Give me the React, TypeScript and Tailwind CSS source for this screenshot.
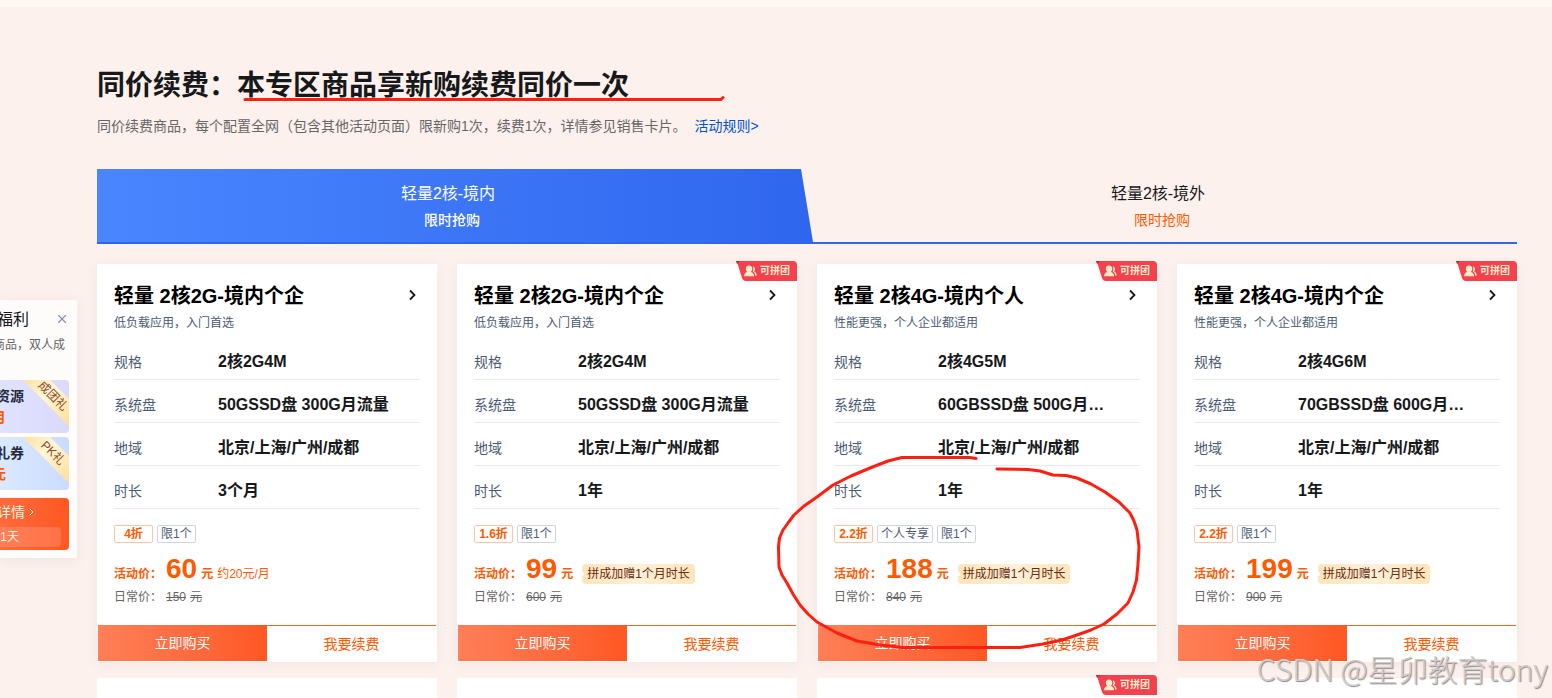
import { X } from 'lucide-react'

type Plan = {
  title: string
  desc: string
  spec: string
  disk: string
  period: string
  tags: string[]
  discount: string
  price: number
  origin: number
  monthly?: string
  bonus?: string
}

const plans: Plan[] = [
  {
    title: '轻量 2核2G-境内个企',
    desc: '低负载应用，入门首选',
    spec: '2核2G4M',
    disk: '50GSSD盘 300G月流量',
    period: '3个月',
    discount: '4折',
    tags: ['限1个'],
    price: 60,
    origin: 150,
    monthly: '约20元/月',
  },
  {
    title: '轻量 2核2G-境内个企',
    desc: '低负载应用，入门首选',
    spec: '2核2G4M',
    disk: '50GSSD盘 300G月流量',
    period: '1年',
    discount: '1.6折',
    tags: ['限1个'],
    price: 99,
    origin: 600,
    bonus: '拼成加赠1个月时长',
  },
  {
    title: '轻量 2核4G-境内个人',
    desc: '性能更强，个人企业都适用',
    spec: '2核4G5M',
    disk: '60GBSSD盘 500G月流量',
    period: '1年',
    discount: '2.2折',
    tags: ['个人专享', '限1个'],
    price: 188,
    origin: 840,
    bonus: '拼成加赠1个月时长',
  },
  {
    title: '轻量 2核4G-境内个企',
    desc: '性能更强，个人企业都适用',
    spec: '2核4G6M',
    disk: '70GBSSD盘 600G月流量',
    period: '1年',
    discount: '2.2折',
    tags: ['限1个'],
    price: 199,
    origin: 900,
    bonus: '拼成加赠1个月时长',
  },
]

function GroupBadge() {
  return (
    <div className="absolute -right-px -top-1 flex h-5 w-[61px] items-center pl-2">
      <svg className="absolute inset-0" width="61" height="20" viewBox="0 0 61 20" aria-hidden="true">
        <path d="M0 0H57Q61 0 61 4V20H10Q7 20 6 17L1 1Z" fill="#f5404d" />
        <path d="M0 0H4L1 3Z" fill="#c9202f" />
      </svg>
      <svg className="relative" width="13" height="12" viewBox="0 0 13 12" fill="#fdeccb" aria-hidden="true">
        <path d="M5 .5C7.200 .5 8.300 2 8.300 3.800C8.300 5.200 7.700 6.300 6.900 7C8.700 7.500 10 8.800 10.200 11.200H0C.2 8.800 1.400 7.500 3.200 7C2.400 6.300 1.800 5.200 1.800 3.800C1.800 2 2.900 .5 5 .5Z" />
        <path d="M8.800 1.500C10.400 1.700 11.200 3 11 4.500C10.900 5.300 10.600 6 10.100 6.500C11.600 7.200 12.600 8.400 12.800 10.400H11.300C11 8.500 10 7.300 8.700 6.600C9.500 5 9.600 3.200 8.800 1.500Z" />
      </svg>
      <span className="relative ml-[3px] whitespace-nowrap text-[10px] font-bold leading-5 text-[#fdeccb]">可拼团</span>
    </div>
  )
}

function SpecRow({ label, value }: { label: string; value: string }) {
  return (
    <div className="flex h-[43px] items-center border-b border-[#e6e9ef] pt-[7px]">
      <dt className="w-[104px] shrink-0 text-sm leading-5 text-[#4b5b76]">{label}</dt>
      <dd className="max-w-[176px] truncate text-base font-bold leading-6 text-[#16181a]">{value}</dd>
    </div>
  )
}

function PlanCard({ plan }: { plan: Plan }) {
  return (
    <article className="relative border border-white bg-white shadow-[0_2px_12px_rgba(60,60,110,0.06)]">
      {plan.bonus && <GroupBadge />}
      <div className="px-4 pt-[17px]">
        <div className="flex items-center justify-between">
          <h2 className="text-xl font-bold leading-7 text-black">{plan.title}</h2>
          <button type="button" aria-label="查看详情" className="pb-0.5 pr-[3px] text-[#16181a]">
            <svg width="9" height="12" viewBox="0 0 9 12" fill="none" stroke="currentColor" strokeWidth="1.8">
              <path d="M2 1.500L6.500 6L2 10.500" />
            </svg>
          </button>
        </div>
        <p className="mt-1 text-xs leading-[18px] text-[#4b5b76]">{plan.desc}</p>

        <dl className="mt-[5px]">
          <SpecRow label="规格" value={plan.spec} />
          <SpecRow label="系统盘" value={plan.disk} />
          <SpecRow label="地域" value="北京/上海/广州/成都" />
          <SpecRow label="时长" value={plan.period} />
        </dl>

        <div className="mt-4 flex gap-1 text-xs leading-4">
          <span className="min-w-[39px] rounded-xs border border-[#ffc4a3] text-center font-bold text-[#ff5a00]">
            {plan.discount}
          </span>
          {plan.tags.map((tag) => (
            <span key={tag} className="rounded-xs border border-[#cfd5e2] px-[3px] text-[#4b5b76]">
              {tag}
            </span>
          ))}
        </div>

        <div className="mt-[10px] flex h-8 items-baseline gap-1 whitespace-nowrap text-xs text-[#ff5a00]">
          <span className="font-bold">活动价：</span>
          <span className="text-[28px] font-bold leading-8">{plan.price}</span>
          <span className="font-bold">元</span>
          {plan.monthly && <span>{plan.monthly}</span>}
          {plan.bonus && (
            <span className="relative ml-[5px] rounded bg-linear-to-r from-[#ffe5bb] via-[#fff0d8] to-[#ffe5bb] px-[5px] leading-5 text-[#6b2c11] before:absolute before:-left-0.5 before:top-2 before:size-1 before:rounded-full before:bg-white">
              {plan.bonus}
            </span>
          )}
        </div>
        <div className="mt-0.5 flex gap-1 text-xs leading-5 text-[#666]">
          <span>日常价：</span>
          <del>{plan.origin}</del>
          <del>元</del>
        </div>
      </div>

      <div className="mt-[18px] grid h-9 grid-cols-2 text-sm">
        <button type="button" className="bg-linear-to-r from-[#ff7f57] to-[#ff5722] text-white">
          立即购买
        </button>
        <button type="button" className="border-t border-[#f4661c] text-[#ff5a00]">
          我要续费
        </button>
      </div>
    </article>
  )
}

function Gift({ name, amount, ribbon, className }: { name: string; amount: string; ribbon: string; className: string }) {
  return (
    <div className={`relative flex h-[53px] flex-col items-end justify-center overflow-hidden whitespace-nowrap rounded-r pr-[45px] font-bold ${className}`}>
      <span className="text-sm leading-[21px] text-[#252b3a]">{name}</span>
      <span className="pr-[18px] text-sm leading-[21px] text-[#ff5a00]">{amount}</span>
      <svg className="absolute right-0 top-0" width="46" height="46" viewBox="0 0 46 46" aria-hidden="true">
        <defs>
          <linearGradient id="ribbon" x1="0" y1="0" x2="1" y2="1">
            <stop offset="0" stopColor="#ffe19d" />
            <stop offset=".4" stopColor="#fff6da" />
            <stop offset="1" stopColor="#ffdf96" />
          </linearGradient>
        </defs>
        <path d="M0 0H27L46 19V46Z" fill="url(#ribbon)" />
      </svg>
      <span className="absolute -right-1 top-2 w-10 rotate-45 text-center text-xs font-normal leading-4 text-[#8c4a20]">
        {ribbon}
      </span>
    </div>
  )
}

// Floating widget docked half way off the left edge
function GroupWidget() {
  return (
    <aside className="absolute left-0 top-[300px] w-[77px] overflow-hidden bg-[#fefcfb] pb-2 pr-2 shadow-[0_2px_12px_rgba(60,60,110,0.08)]">
      <div className="flex items-center justify-end whitespace-nowrap pt-2">
        <span className="text-base leading-6 text-[#16181a]">拼团福利</span>
        <button type="button" aria-label="关闭" className="ml-[26px] pb-0.5 text-[#8793ab]">
          <X size={14} strokeWidth={2} />
        </button>
      </div>
      <p className="mt-[3px] flex justify-end whitespace-nowrap pr-1 text-xs leading-5 text-[#666]">购买指定商品，双人成</p>
      <div className="mt-[25px] flex flex-col gap-1">
        <Gift name="免费资源" amount="1个月" ribbon="成团礼" className="bg-linear-to-r from-[#dfe3ff] to-[#dcd8fb]" />
        <Gift name="专属礼券" amount="100元" ribbon="PK礼" className="bg-linear-to-r from-[#dbe9ff] to-[#cadcff]" />
      </div>
      <button
        type="button"
        className="mt-2 flex h-[52px] w-full flex-col items-end rounded-r bg-linear-to-r from-[#ff6a3c] to-[#ff5722] pr-2 pt-1 text-sm text-[#fff1dd]"
      >
        <span className="flex items-center gap-1 whitespace-nowrap pr-[26px] leading-5">
          查看详情
          <svg width="6" height="8" viewBox="0 0 6 8" fill="none" stroke="currentColor">
            <path d="M1 1L4 4L1 7" />
          </svg>
        </span>
        <span className="mt-[5px] flex h-5 w-full justify-end whitespace-nowrap rounded-r bg-white/15 pr-[42px] text-xs leading-5">
          仅剩21天
        </span>
      </button>
    </aside>
  )
}

function Marks() {
  return (
    <svg
      className="pointer-events-none absolute left-0 top-0"
      width="1552"
      height="698"
      viewBox="0 0 1552 698"
      fill="none"
      stroke="#ff1f10"
      strokeWidth="3"
      strokeLinecap="round"
      strokeLinejoin="round"
      aria-hidden="true"
    >
      <path d="M245 99.500H721L723 97.500" />
      <path d="M976 458.500L970 457.500H902L888 461L870 468L851 476L833 485L817 497L804 506L794 515L788 523L783 530L779.500 538L778.500 547L779 567L782 575L787 583L793 594L800 605L808 614L817 622L837 633L857 641L880 645L903 647.500H1020L1043 644L1062 640L1077 635L1091 630L1104 624L1117 614L1128 603L1133 592L1136.500 580L1138 564L1139 547L1137 530L1134 521L1130 513L1119 502L1105 492L1091 484L1077 478L1066 475.500L1053 475L1040 471L1028 469.500L997 469" />
    </svg>
  )
}

export default function App() {
  return (
    <div className="relative h-screen overflow-hidden border-t-[7px] border-[#fef8f3] bg-[#fdf1ed] font-['Liberation_Sans','Noto_Sans_CJK_SC',sans-serif]">
      <main className="pl-[97px] pr-[35px] pt-[59px]">
        <h1 className="text-[28px] font-bold leading-10 text-[#16181a]">同价续费：本专区商品享新购续费同价一次</h1>
        <p className="mt-[10px] text-sm leading-5 text-[#666]">
          同价续费商品，每个配置全网（包含其他活动页面）限新购1次，续费1次，详情参见销售卡片。
          <a href="#rules" className="ml-2 text-[#0052d9]">
            活动规则&gt;
          </a>
        </p>

        <div role="tablist" className="mt-[33px] grid h-[75px] grid-cols-2 border-b-2 border-[#2f66ee]">
          <button type="button" role="tab" aria-selected="true" className="relative text-white">
            <span className="absolute inset-y-0 left-0 -right-1.5 bg-linear-to-r from-[#4a86ff] to-[#2f66ee] [clip-path:polygon(0_0,calc(100%-12px)_0,100%_100%,0_100%)]" />
            <span className="relative block pr-2 text-base leading-6">轻量2核-境内</span>
            <span className="relative mt-1 block text-sm font-medium leading-5">限时抢购</span>
          </button>
          <button type="button" role="tab" aria-selected="false" className="text-[#16181a]">
            <span className="block pr-2 text-base leading-6">轻量2核-境外</span>
            <span className="mt-1 block text-sm leading-5 text-[#ff5a00]">限时抢购</span>
          </button>
        </div>

        <div className="mt-5 grid grid-cols-4 gap-x-5 gap-y-4">
          {plans.map((plan, i) => (
            <PlanCard key={i} plan={plan} />
          ))}
          {[false, false, true, false].map((grouped, i) => (
            <article key={i} className="relative h-[398px] border border-white bg-white">
              {grouped && <GroupBadge />}
            </article>
          ))}
        </div>
      </main>

      <div className="absolute inset-x-0 -top-[7px]">
        <GroupWidget />
        <Marks />
      </div>
      <div className="absolute bottom-[10px] right-1 whitespace-nowrap font-['Noto_Sans_CJK_SC',sans-serif] text-[30px] font-light leading-10 text-[#d0cccb] [text-shadow:1px_1px_1px_#8a8686]">
        CSDN @星卯教育tony
      </div>
    </div>
  )
}
